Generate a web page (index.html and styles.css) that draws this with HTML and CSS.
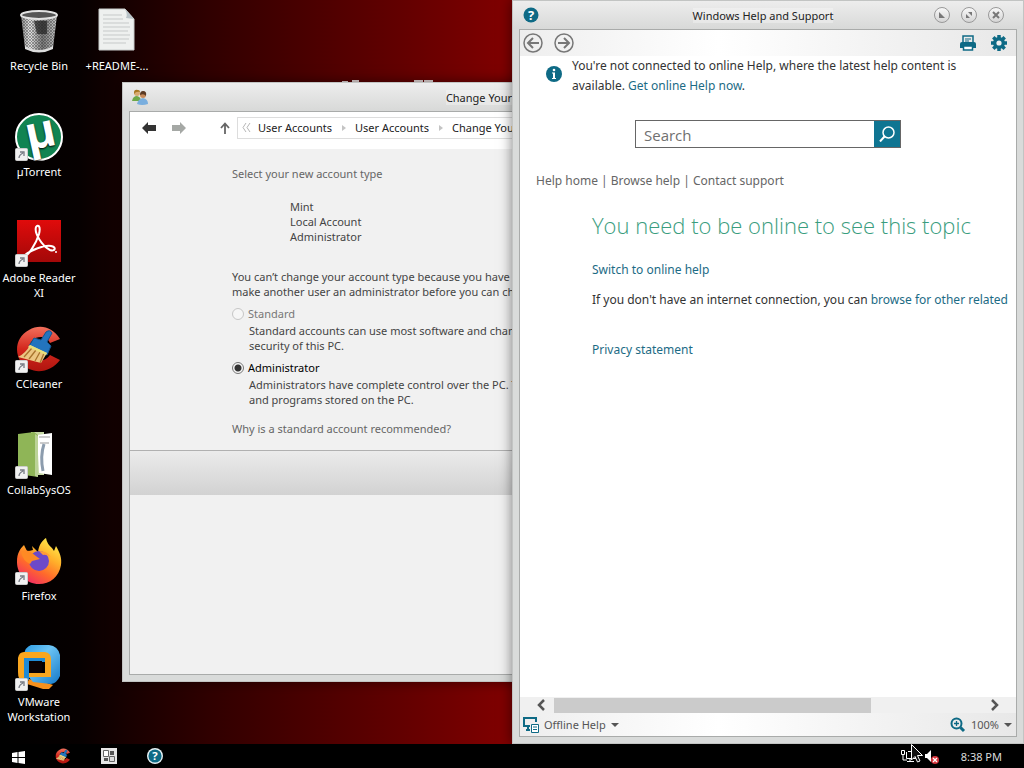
FILE: index.html
```html
<!DOCTYPE html>
<html lang="en">
<head>
    <meta charset="UTF-8">
    <meta name="viewport" content="width=device-width, initial-scale=1.0">
    <title>Desktop</title>
    <link rel="stylesheet" href="styles.css">
</head>
<body>

<svg class="defs" width="0" height="0" aria-hidden="true">
    <defs>
        <linearGradient id="metal" x1="0" x2="1" y1="0" y2="0">
            <stop offset="0" stop-color="#8a8a8a"/><stop offset=".25" stop-color="#e4e4e4"/>
            <stop offset=".6" stop-color="#777"/><stop offset="1" stop-color="#c8c8c8"/>
        </linearGradient>
        <pattern id="mesh" width="3" height="3" patternUnits="userSpaceOnUse">
            <path d="M0 0L3 3M3 0L0 3" stroke="#333" stroke-width=".7" opacity=".6"/>
        </pattern>
        <linearGradient id="adobe" x1="0" x2="0" y1="0" y2="1">
            <stop offset="0" stop-color="#e00b0b"/><stop offset="1" stop-color="#a30808"/>
        </linearGradient>
        <linearGradient id="ccRed" x1="0" x2="0" y1="0" y2="1">
            <stop offset="0" stop-color="#f2705c"/><stop offset=".5" stop-color="#d3271d"/><stop offset="1" stop-color="#b0150f"/>
        </linearGradient>
        <linearGradient id="fox" x1=".8" x2=".2" y1="0" y2="1">
            <stop offset="0" stop-color="#fff14f"/><stop offset=".35" stop-color="#ffb02a"/>
            <stop offset=".65" stop-color="#ff6a2b"/><stop offset="1" stop-color="#f0256a"/>
        </linearGradient>
        <linearGradient id="vmBlue" x1="0" x2="1" y1="0" y2="1">
            <stop offset="0" stop-color="#2b9be4"/><stop offset=".4" stop-color="#6cc4f4"/><stop offset="1" stop-color="#1478c8"/>
        </linearGradient>
        <symbol id="shortcut" viewBox="0 0 13 13">
            <rect x=".5" y=".5" width="12" height="12" rx="1" fill="#f1f1f1" stroke="#ccc"/>
            <path d="M4 10C4 8 5 6.500 8 5M5 4H9V8" fill="none" stroke="#777b84" stroke-width="1.300"/>
        </symbol>
        <symbol id="ccleaner" viewBox="0 0 48 48">
            <path d="M45 14C37 1 24 -1 14 5C1 12 -1 27 6 37C15 50 35 49 45 35L35 30C30 37 20 38 16 30C11 20 18 11 27 12C31 12 33 14 35 18Z" fill="url(#ccRed)"/>
            <path d="M31 7q4-3 6 1l-5 9 4 4-4 9-18-9 5-8 7 2z" fill="#2374bd" stroke="#16548d"/>
            <path d="M15 20L32 28L26 38L3 32Q11 28 15 20Z" fill="#ecc682"/>
            <path d="M17 23L9 32M21 25L14 34M25 27L20 36M29 28L25 38" stroke="#a8742d" stroke-width="1.300"/>
            <path d="M15 20L32 28L31 30L13 22Z" fill="#e9e07a"/>
        </symbol>
        <symbol id="help" viewBox="0 0 16 16">
            <circle cx="8" cy="8" r="7.500" fill="#0e6a85"/>
            <text x="8" y="13" text-anchor="middle" class="glyph">?</text>
        </symbol>
    </defs>
</svg>

<main class="desktop">
    <svg class="wallpaper-mark" viewBox="0 0 94 3" aria-hidden="true">
        <path d="M2 2H8M12 1H19M74 1H83M84 1H93" stroke="#e8dada" stroke-width="2"/>
    </svg>

    <nav class="icons" aria-label="Desktop icons">
        <a class="icon" href="#">
            <svg viewBox="0 0 48 48">
                <path d="M6 8L10 41Q24 49 38 41L42 8Z" fill="url(#metal)"/>
                <path d="M6 8L10 41Q24 49 38 41L42 8Z" fill="url(#mesh)"/>
                <path d="M19 14h13v13h-10z" fill="#222" opacity=".7"/>
                <path d="M10 39Q24 47 38 39V42Q24 49 10 42Z" fill="#ddd"/>
                <ellipse cx="24" cy="8" rx="18" ry="4" fill="#555" stroke="#e2e2e2" stroke-width="2"/>
            </svg>
            <span>Recycle Bin</span>
        </a>
        <a class="icon" href="#">
            <svg viewBox="0 0 48 48">
                <circle cx="24" cy="24" r="23" fill="#118452" stroke="#fff" stroke-width="2"/>
                <text x="26" y="35" text-anchor="middle" class="mu" transform="rotate(-12 24 24)">µ</text>
                <use href="#shortcut" x="0" y="35" width="13" height="13"/>
            </svg>
            <span>µTorrent</span>
        </a>
        <a class="icon" href="#">
            <svg viewBox="0 0 48 48">
                <rect x="2" y="1" width="44" height="42" fill="url(#adobe)"/>
                <path d="M9 38C13 37 21 25 24 15C26 7 23 5 21 8C19 14 27 27 35 31C40 33 42 28 36 27C29 26 16 31 10 36Z" fill="none" stroke="#fff" stroke-width="2"/>
                <circle cx="41" cy="33" r="1" fill="#fff"/>
                <use href="#shortcut" x="0" y="35" width="13" height="13"/>
            </svg>
            <span>Adobe Reader XI</span>
        </a>
        <a class="icon" href="#">
            <svg viewBox="0 0 48 48">
                <use href="#ccleaner" width="48" height="48"/>
                <use href="#shortcut" x="0" y="35" width="13" height="13"/>
            </svg>
            <span>CCleaner</span>
        </a>
        <a class="icon" href="#">
            <svg viewBox="0 0 48 48">
                <path d="M16 1h13v43H16z" fill="#c6d9a5"/>
                <path d="M22 4L37 2V44L24 42Z" fill="#fff"/>
                <path d="M24 6h11M25 12h9" stroke="#999"/>
                <path d="M29 13q-4 12-1 27" fill="none" stroke="#8c9cad" stroke-width="3"/>
                <path d="M3 3L19 1L23 4V46L3 43Z" fill="#8fb557"/>
                <path d="M20 3L23 5V46L20 45Z" fill="#bcd397"/>
                <use href="#shortcut" x="0" y="35" width="13" height="13"/>
            </svg>
            <span>CollabSysOS</span>
        </a>
        <a class="icon" href="#">
            <svg viewBox="0 0 48 48">
                <path d="M2 25C2 16 5 12 9 8L12 14Q15 14 18 13L17 9L23 15C24 7 28 3 31 1Q32 7 37 11L39 14L41 9C45 16 47 21 46 28C44 40 35 47 24 47C11 47 2 37 2 25Z" fill="url(#fox)"/>
                <circle cx="24" cy="24" r="10" fill="#6d49c8"/>
                <path d="M24 14Q32 14 36 20Q30 17 28 18Z" fill="#ff9b38"/>
                <path d="M6 15Q11 11 17 16Q22 20 25 22L17 24L15 27Q8 24 6 15Z" fill="#ff8a24"/>
                <use href="#shortcut" x="0" y="35" width="13" height="13"/>
            </svg>
            <span>Firefox</span>
        </a>
        <a class="icon" href="#">
            <svg viewBox="0 0 48 48">
                <path d="M14 36L32 40L38 42L34 46L28 46L12 41Z" fill="#f5901d"/>
                <path d="M16 2H34Q43 3 45 12V33Q42 40 36 41L18 39L12 32H33V12H9Q10 4 16 2Z" fill="url(#vmBlue)"/>
                <path d="M9 9H30Q36 10 36 16V34H14V30H30V15H9V36L4 35Q3 33 3 29V15Q4 9 9 9Z" fill="#f9a61f"/>
                <path d="M9 15H14V37H9ZM14 15H30V19H14Z" fill="#1f8ad6"/>
                <path d="M14 18H27V30H14Z" fill="#0b0204"/>
                <use href="#shortcut" x="0" y="35" width="13" height="13"/>
            </svg>
            <span>VMware Workstation</span>
        </a>
        <a class="icon" href="#">
            <svg viewBox="0 0 48 48">
                <path d="M6 2H32L41 12V43H6Z" fill="#eef0ef" stroke="#c9cccb"/>
                <path d="M32 2Q35 8 33 11L41 12Z" fill="#b9c3c8"/>
                <path d="M10 8H29M10 12H30M10 16H36M10 20H37M10 24H35M10 28H37M10 32H36M10 36H33" stroke="#c6c9c9"/>
            </svg>
            <span>+README-...</span>
        </a>
    </nav>

    <section class="window accounts">
        <header class="titlebar">
            <svg class="app-icon" viewBox="0 0 16 16">
                <circle cx="5" cy="4" r="3" fill="#d8ab72"/><path d="M2 4Q2 0 6 1Q8 1 8 3Q4 2 2 5Z" fill="#a77722"/>
                <path d="M0 12Q1 7 5 7Q9 8 9 12Z" fill="#6da848"/>
                <circle cx="11" cy="6" r="3" fill="#c68a5b"/><path d="M8 6Q8 2 11 2Q15 2 14 7Q12 4 8 6Z" fill="#5b3a24"/>
                <path d="M5 15Q6 10 11 9Q16 10 16 15Q10 17 5 15Z" fill="#79aede"/>
            </svg>
            <h1>Change Your Account Type</h1>
        </header>
        <div class="pane">
            <div class="navbar">
                <button class="plain back" aria-label="Back"><svg viewBox="0 0 14 12"><path d="M0 6L6 0V3H14V9H6V12Z" fill="#333"/></svg></button>
                <button class="plain forward" aria-label="Forward"><svg viewBox="0 0 14 12"><path d="M14 6L8 0V3H0V9H8V12Z" fill="#a5a8a5"/></svg></button>
                <button class="plain up" aria-label="Up"><svg viewBox="0 0 10 12"><path d="M5 12V2M1 6L5 1.500L9 6" fill="none" stroke="#666" stroke-width="1.800"/></svg></button>
                <div class="address">
                    <svg class="more" viewBox="0 0 9 9"><path d="M4 0L1 4.500L4 9M8 0L5 4.500L8 9" fill="none" stroke="#b5b5b5"/></svg>
                    <a href="#">User Accounts</a>
                    <i class="sep"></i>
                    <a href="#">User Accounts</a>
                    <i class="sep"></i>
                    <a href="#">Change Your Account Type</a>
                </div>
            </div>
            <form class="account-form">
                <h2>Select your new account type</h2>
                <p class="user">Mint<br>Local Account<br>Administrator</p>
                <p class="notice">You can’t change your account type because you have the only administrator account on this PC. You must<br>make another user an administrator before you can change your account.</p>
                <div class="choice">
                    <input type="radio" name="type" id="standard" disabled>
                    <label for="standard" class="off">Standard</label>
                    <p>Standard accounts can use most software and change system settings that don’t affect other users or the<br>security of this PC.</p>
                </div>
                <div class="choice">
                    <input type="radio" name="type" id="admin" checked>
                    <label for="admin">Administrator</label>
                    <p>Administrators have complete control over the PC. They can change any settings and access all of the files<br>and programs stored on the PC.</p>
                </div>
                <a class="why" href="#">Why is a standard account recommended?</a>
            </form>
            <div class="form-footer"></div>
        </div>
    </section>

    <section class="window help">
        <header class="titlebar">
            <svg class="app-icon"><use href="#help"/></svg>
            <h1>Windows Help and Support</h1>
            <div class="controls">
                <button aria-label="Minimize"><svg viewBox="0 0 8 8"><path d="M1 1V7H7Z" fill="#777"/></svg></button>
                <button aria-label="Maximize"><svg viewBox="0 0 8 8"><path d="M3 1H7V5ZM1 3V7H5Z" fill="#777"/></svg></button>
                <button aria-label="Close"><svg viewBox="0 0 8 8"><path d="M1 1L7 7M7 1L1 7" stroke="#777" stroke-width="2"/></svg></button>
            </div>
        </header>
        <div class="pane">
            <div class="toolbar">
                <button class="round" aria-label="Back"><svg viewBox="0 0 20 20"><circle cx="10" cy="10" r="9" fill="none" stroke="#777" stroke-width="1.500"/><path d="M16 10H5M10 5L5 10L10 15" fill="none" stroke="#777" stroke-width="2"/></svg></button>
                <button class="round" aria-label="Forward"><svg viewBox="0 0 20 20"><circle cx="10" cy="10" r="9" fill="none" stroke="#777" stroke-width="1.500"/><path d="M4 10H15M10 5L15 10L10 15" fill="none" stroke="#777" stroke-width="2"/></svg></button>
                <button class="tool print" aria-label="Print"><svg viewBox="0 0 16 16"><path d="M3 7V1H13V7" fill="none" stroke="#0e6a85" stroke-width="1.500"/><path d="M5 4H11M5 6H9" stroke="#0e6a85"/><path d="M0 9Q0 7 2 7H14Q16 7 16 9V13H13V11H3V13H0Z" fill="#0e6a85"/><path d="M3.500 11H12.500V15H3.500Z" fill="#fff" stroke="#0e6a85" stroke-width="1.500"/></svg></button>
                <button class="tool" aria-label="Options"><svg viewBox="0 0 16 16"><g stroke="#0e6a85" stroke-width="3.500"><path d="M8 0V16M0 8H16M2.300 2.300L13.700 13.700M13.700 2.300L2.300 13.700"/></g><circle cx="8" cy="8" r="6" fill="#0e6a85"/><circle cx="8" cy="8" r="2.600" fill="#f0f0f0"/></svg></button>
            </div>
            <div class="topic">
                <div class="info">
                    <svg viewBox="0 0 16 16"><circle cx="8" cy="8" r="8" fill="#0e6a85"/><circle cx="8" cy="4" r="1.300" fill="#fff"/><path d="M6 6.500H9V12H10V13H6V12H7V7.500H6Z" fill="#fff"/></svg>
                    <p>You're not connected to online Help, where the latest help content is<br>available. <a href="#">Get online Help now</a>.</p>
                </div>
                <form class="search">
                    <input type="text" placeholder="Search" aria-label="Search">
                    <button type="button" aria-label="Search"><svg viewBox="0 0 16 16"><circle cx="9.500" cy="6.500" r="5.500" fill="none" stroke="#fff" stroke-width="1.500"/><path d="M5.500 10.500L1 15.500" stroke="#fff" stroke-width="2"/></svg></button>
                </form>
                <nav class="links"><a href="#">Help home</a> | <a href="#">Browse help</a> | <a href="#">Contact support</a></nav>
                <article>
                    <h2>You need to be online to see this topic</h2>
                    <p><a href="#">Switch to online help</a></p>
                    <p>If you don't have an internet connection, you can <a href="#">browse for other related</a></p>
                    <p class="privacy"><a href="#">Privacy statement</a></p>
                </article>
            </div>
            <div class="scrollbar">
                <button class="plain" aria-label="Scroll left"><svg viewBox="0 0 8 12"><path d="M7 1L2 6L7 11" fill="none" stroke="#555" stroke-width="2.500"/></svg></button>
                <div class="track"><div class="thumb"></div></div>
                <button class="plain" aria-label="Scroll right"><svg viewBox="0 0 8 12"><path d="M1 1L6 6L1 11" fill="none" stroke="#555" stroke-width="2.500"/></svg></button>
            </div>
            <footer class="status">
                <button class="plain">
                    <svg viewBox="0 0 16 16"><path d="M7 9H1V1H13V5M3 13H7M5 9V13" fill="none" stroke="#0e6a85" stroke-width="2"/><path d="M8.500 7.500H15.500V15.500H8.500ZM10 10H14M10 12.500H14" fill="#fff" stroke="#0e6a85"/></svg>
                    Offline Help
                    <i class="caret"></i>
                </button>
                <button class="plain">
                    <svg viewBox="0 0 16 16"><circle cx="6.500" cy="6.500" r="5" fill="none" stroke="#0e6a85" stroke-width="2"/><path d="M6.500 4V9M4 6.500H9" stroke="#0e6a85" stroke-width="1.300"/><path d="M10.500 10.500L14 14" stroke="#0e6a85" stroke-width="3"/></svg>
                    100%
                    <i class="caret"></i>
                </button>
            </footer>
        </div>
    </section>
</main>

<footer class="taskbar">
    <button aria-label="Start"><svg viewBox="-2 -1 16 16"><path d="M1 4L6.500 3V8H1ZM7.500 3L14 2V8H7.500ZM1 9H6.500V14L1 13ZM7.500 9H14V15L7.500 14Z" fill="#fff"/></svg></button>
    <button aria-label="CCleaner"><svg><use href="#ccleaner"/></svg></button>
    <button aria-label="Task view"><svg viewBox="0 0 16 16"><path d="M0 0H16V16H0Z" fill="#e6e6e6"/><path d="M2.500 2.500H7.500V8.500H2.500Z" fill="#fff" stroke="#666"/><path d="M9 3H13V7H9ZM3 10H7V13H3Z" fill="#555"/><path d="M8.500 8.500H13.500V13.500H8.500Z" fill="#ddd" stroke="#666"/></svg></button>
    <button aria-label="Help"><svg viewBox="0 0 16 16"><circle cx="8" cy="8" r="8" fill="#e5f1f4"/><use href="#help" x="1" y="1" width="14" height="14"/></svg></button>
    <div class="tray">
        <svg class="tray-icons" viewBox="0 0 40 16">
            <path d="M1.500 2.500H4.500V6.500H1.500ZM3 7V12H7M8 3.500H16V10.500H6.500V4M10 11V13M7 13.500H14" fill="none" stroke="#fff"/>
            <path d="M25 6H27L31 2V14L27 10H25Z" fill="#fff"/>
            <circle cx="35" cy="12" r="4" fill="#d8343c"/><path d="M33 10L37 14M37 10L33 14" stroke="#fff" stroke-width="1.300"/>
        </svg>
        <time>8:38 PM</time>
    </div>
</footer>

<svg class="cursor" viewBox="0 0 12 19" aria-hidden="true"><path d="M.5 .5V16L4 12.500L6.500 18L9 17L6.500 11.500H11.500Z" fill="#111" stroke="#fff"/></svg>

</body>
</html>
```
FILE: styles.css
```css
* {
    box-sizing: border-box;
}
body {
    margin: 0;
    height: 100vh;
    display: flex;
    flex-direction: column;
    overflow: hidden;
    background: #000;
    color: #444;
    font: 11px/15px "Noto Sans", "Open Sans", sans-serif;
}
h1, h2, p {
    margin: 0;
    font-size: 11px;
    font-weight: normal;
}
a {
    color: inherit;
    text-decoration: none;
}
svg {
    display: block;
}
button {
    font: inherit;
    color: inherit;
    padding: 0;
    border: none;
    background: none;
}
.defs {
    position: absolute;
}
.glyph {
    font: bold 13px "Open Sans", sans-serif;
    fill: #fff;
}
.mu {
    font: bold 46px "Open Sans", sans-serif;
    fill: #fff;
}

/* desktop */
.desktop {
    flex: 1;
    position: relative;
    overflow: hidden;
    background: linear-gradient(90deg, #000 0, #060000 80px, #180000 130px, #300000 210px, #480000 300px, #620000 400px, #7e0000 500px);
}
.wallpaper-mark {
    position: absolute;
    left: 340px;
    top: 80px;
    width: 94px;
}
.icons {
    display: grid;
    grid-auto-flow: column;
    grid-template-rows: repeat(7, 106px);
    grid-auto-columns: 78px;
}
.icon {
    display: flex;
    flex-direction: column;
    align-items: center;
    gap: 3px;
    padding-top: 7px;
    color: #fff;
    text-align: center;
    text-shadow: 0 1px 2px #000;
}
.icon svg {
    width: 48px;
    height: 48px;
}

/* windows */
.window {
    position: absolute;
    display: flex;
    flex-direction: column;
    padding: 0 6px 6px;
    background: #d9dbda;
    border: 1px solid #c2c4c3;
    box-shadow: 0 0 12px rgba(0, 0, 0, 0.5);
}
.accounts {
    left: 122px;
    top: 82px;
    width: 796px;
    height: 600px;
}
.help {
    left: 512px;
    right: 0;
    top: 0;
    bottom: 0;
}
.titlebar {
    display: grid;
    grid-template-columns: 1fr auto 1fr;
    align-items: center;
    height: 28px;
    flex: none;
    margin: 0 -6px;
    padding: 0 19px 0 9px;
    background: linear-gradient(#ededed, #d8d9d8);
    color: #222;
}
.titlebar h1 {
    background: rgba(255, 255, 255, 0.3);
}
.app-icon {
    width: 16px;
    height: 16px;
}
.pane {
    flex: 1;
    min-height: 0;
    display: flex;
    flex-direction: column;
    overflow: hidden;
    border: 1px solid #a9abaa;
    background: #f1f1f1;
}
.controls {
    display: flex;
    justify-content: flex-end;
    gap: 11px;
}
.controls button {
    display: grid;
    place-items: center;
    width: 16px;
    height: 16px;
    border: 1px solid #999;
    border-radius: 50%;
    background: linear-gradient(#f8f8f8, #d5d5d5);
}
.controls svg {
    width: 8px;
}

/* user accounts */
.navbar {
    display: flex;
    align-items: center;
    height: 37px;
    flex: none;
    padding: 0 12px 6px;
    background: #fff;
}
.back svg, .forward svg {
    width: 14px;
}
.forward {
    margin-left: 16px;
}
.up {
    margin: 0 7px 0 34px;
}
.up svg {
    width: 10px;
}
.address {
    flex: 1;
    display: flex;
    align-items: center;
    height: 22px;
    padding-left: 4px;
    border: 1px solid #ddd;
    color: #222;
}
.more {
    width: 9px;
    margin-right: 7px;
}
.sep {
    margin: 0 9px 0 10px;
    border: 3px solid transparent;
    border-left: 4px solid #c4c4c4;
    border-right: none;
}
.account-form {
    padding: 17px 102px 14px;
    white-space: nowrap;
}
.account-form h2, .why {
    color: #666;
}
.user {
    padding: 18px 0 25px 58px;
}
.notice {
    margin-bottom: 7px;
}
.choice {
    display: grid;
    grid-template-columns: 12px 1fr;
    column-gap: 4px;
    row-gap: 2px;
    align-items: center;
    margin-bottom: 7px;
}
.choice p {
    grid-column: 2;
    padding-left: 1px;
}
.choice label {
    color: #000;
}
.choice .off {
    color: #777;
}
.choice input {
    appearance: none;
    width: 12px;
    height: 12px;
    margin: 0;
    border: 1px solid #777;
    border-radius: 50%;
    background: #f6f6f6;
}
.choice input:disabled {
    border-color: #c6c6c6;
}
.choice input:checked {
    background: radial-gradient(#333 0 3px, #f6f6f6 4px);
}
.why {
    display: block;
    margin-top: 14px;
}
.form-footer {
    height: 45px;
    border-top: 1px solid #b0b0b0;
    background: linear-gradient(#ebebeb, #d2d2d2);
}

/* help and support */
.help .app-icon {
    margin-left: 1px;
}
.help .pane {
    background: #fff;
    color: #333;
    font-size: 12px;
    line-height: 20px;
}
.help p {
    font-size: 12px;
}
.toolbar, .status {
    display: flex;
    align-items: center;
    flex: none;
    background: linear-gradient(90deg, #eee, #fff 40%, #e8e8e8);
}
.toolbar {
    height: 26px;
    padding: 0 9px 0 3px;
}
.round {
    margin-right: 11px;
}
.round svg {
    width: 20px;
}
.tool svg {
    width: 16px;
}
.print {
    margin: 0 15px 0 auto;
}
.topic {
    flex: 1;
    overflow: hidden;
    white-space: nowrap;
}
.topic a {
    color: #1c6b85;
}
.info {
    display: flex;
    gap: 10px;
    padding-left: 26px;
}
.info svg {
    width: 16px;
    height: 16px;
    margin-top: 10px;
}
.search {
    display: flex;
    width: 266px;
    height: 28px;
    margin: 24px auto 0 115px;
    border: 1px solid #666;
}
.search input {
    flex: 1;
    min-width: 0;
    padding: 2px 8px 0;
    border: none;
    font: 15px "Open Sans", sans-serif;
}
.search input::placeholder {
    color: #707070;
}
.search button {
    display: grid;
    place-items: center;
    width: 26px;
    background: #0f7592;
}
.search button svg {
    width: 16px;
}
.links {
    padding: 23px 0 0 16px;
    color: #666;
}
.links a {
    color: #666;
}
article {
    padding: 19px 0 0 72px;
}
article h2 {
    margin-bottom: 20px;
    font: 300 22px/30px "Open Sans", sans-serif;
    color: #3a9d7e;
}
article p {
    margin-bottom: 10px;
}
article .privacy {
    padding-top: 20px;
}
.scrollbar {
    display: flex;
    align-items: center;
    flex: none;
    height: 16px;
    padding: 0 17px;
    background: #f0f0f0;
}
.scrollbar svg {
    width: 8px;
}
.track {
    flex: 1;
    height: 15px;
    margin: 0 9px;
}
.thumb {
    width: 74%;
    height: 15px;
    background: #cbcbcb;
}
.status {
    justify-content: space-between;
    height: 23px;
    padding: 0 4px 0 3px;
    font-size: 11px;
    color: #555;
}
.status button {
    display: flex;
    align-items: center;
    gap: 5px;
}
.status svg {
    width: 16px;
}
.caret {
    border: 4px solid transparent;
    border-top-color: #555;
    border-bottom: none;
}

/* taskbar */
.taskbar {
    display: flex;
    align-items: center;
    gap: 30px;
    height: 24px;
    padding: 0 22px 0 9px;
    background: #000;
    color: #ddd;
}
.taskbar button svg {
    width: 16px;
    height: 16px;
}
.tray {
    display: flex;
    align-items: center;
    gap: 21px;
    margin-left: auto;
}
.tray-icons {
    width: 40px;
}
.cursor {
    position: absolute;
    left: 911px;
    top: 744px;
    width: 12px;
}
```
